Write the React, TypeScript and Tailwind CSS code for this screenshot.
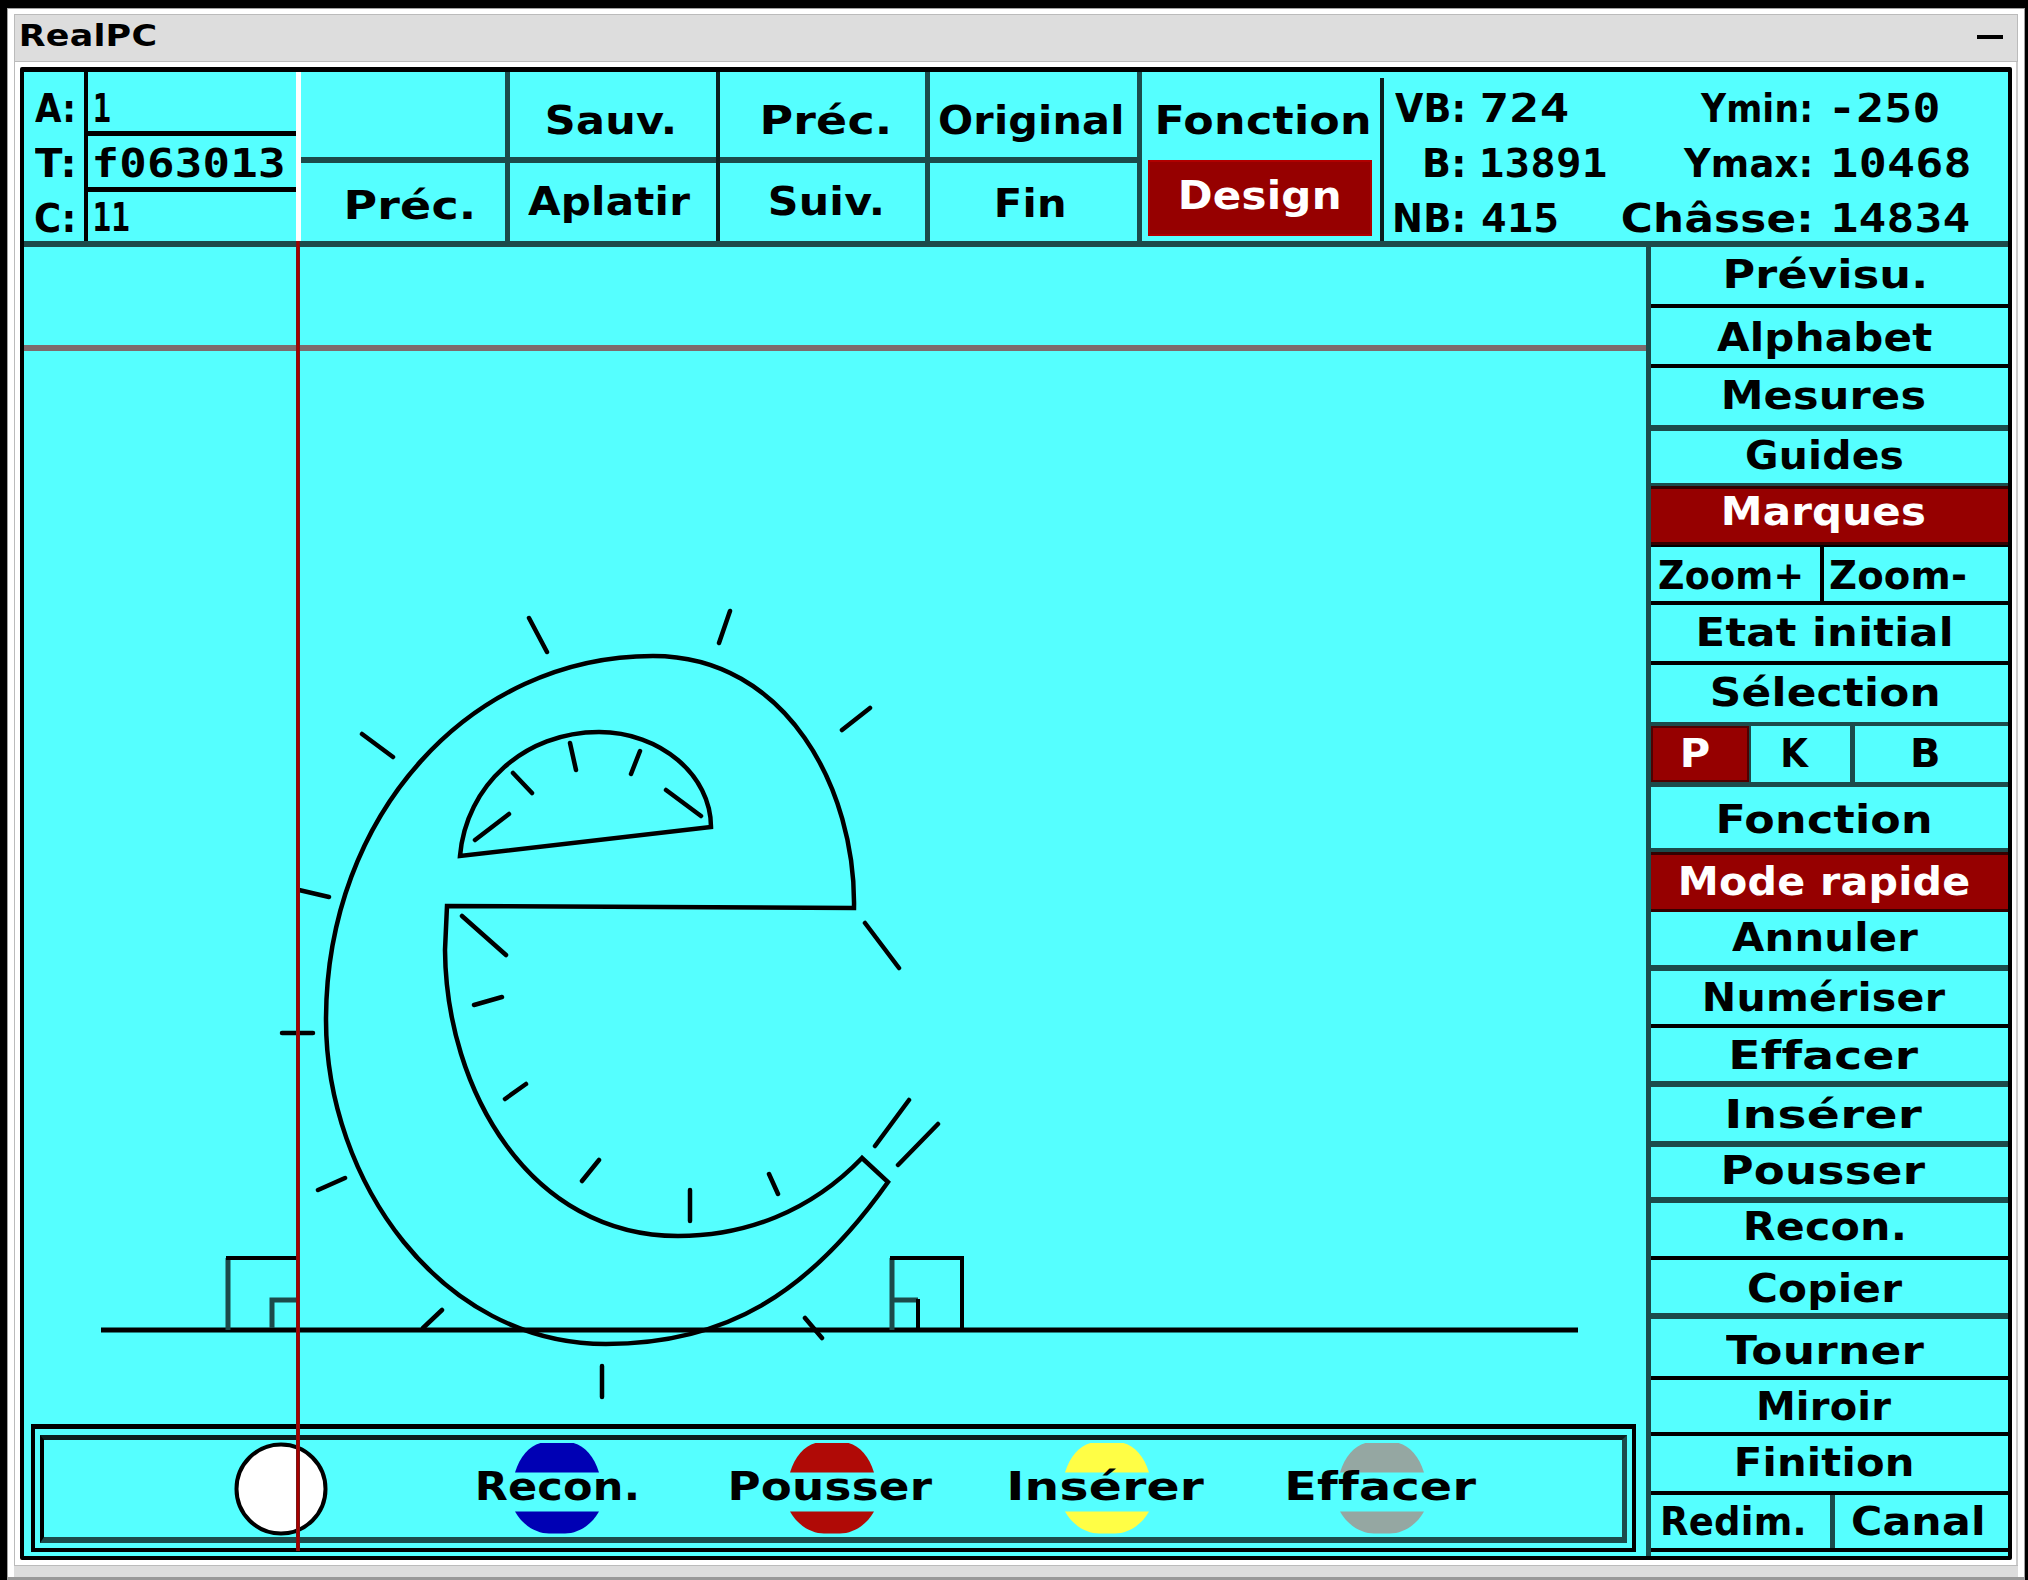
import React from 'react';

const ctx = document.createElement('canvas').getContext('2d')!;

type LabelProps = { w: number; children: string; mono?: boolean; small?: boolean; className?: string };

/* Bold text stretched so that its ink spans exactly `w` pixels. */
function Label({ w, children, mono, small, className = '' }: LabelProps) {
  ctx.font = `bold ${small ? 31 : 38.4}px ${mono ? '"DejaVu Sans Mono"' : '"DejaVu Sans"'}`;
  ctx.letterSpacing = '0.2px';
  const m = ctx.measureText(children);
  const s = w / (m.actualBoundingBoxLeft + m.actualBoundingBoxRight);
  return (
    <span
      className={`block shrink-0 whitespace-pre font-bold tracking-[0.2px] ${small ? 'h-[23px] text-[31px] leading-[23px]' : 'h-[28px] text-[38.4px] leading-[31px]'} ${mono ? "font-['DejaVu_Sans_Mono',monospace]" : "font-['DejaVu_Sans',sans-serif]"} ${className}`}
      style={{ width: w }}
    >
      <span
        className="inline-block origin-left"
        style={{ transform: `translateX(${m.actualBoundingBoxLeft * s}px) scaleX(${s})` }}
      >
        {children}
      </span>
    </span>
  );
}

const T = 'border-[#1c4b4b]';
const B = 'border-black';

type Item = { text: string; w: number; row: string; red?: boolean };

function Row({ text, w, row, red }: Item) {
  return (
    <div className={`flex shrink-0 justify-center pr-[10px] ${row} ${red ? 'bg-[#960000] text-white' : ''}`}>
      <Label w={w}>{text}</Label>
    </div>
  );
}

const upper: Item[] = [
  { text: 'Prévisu.', w: 198, row: `h-[61px] border-b-4 pt-[12px] ${B}` },
  { text: 'Alphabet', w: 215, row: `h-[60px] border-b-4 pt-[14px] ${B}` },
  { text: 'Mesures', w: 201, row: `h-[63px] border-b-6 pt-[12px] ${T}` },
  { text: 'Guides', w: 157, row: `h-[55px] border-b-3 pt-[9px] ${T}` },
  { text: 'Marques', w: 201, row: `h-[59px] border-y-3 border-[#330000] pt-[7px]`, red: true },
];

const middle: Item[] = [
  { text: 'Etat initial', w: 251, row: `h-[60px] border-b-4 pt-[12px] ${B}` },
  { text: 'Sélection', w: 226, row: `h-[61px] border-b-4 pt-[12px] ${T}` },
];

const lower: Item[] = [
  { text: 'Fonction', w: 211, row: `h-[65px] border-b-4 pt-[17px] ${T}` },
  { text: 'Mode rapide', w: 288, row: `h-[60px] border-y-3 border-[#330000] pt-[11px]`, red: true },
  { text: 'Annuler', w: 186, row: `h-[59px] border-b-6 pt-[10px] ${T}` },
  { text: 'Numériser', w: 240, row: `h-[57px] border-b-4 pt-[11px] ${B}` },
  { text: 'Effacer', w: 186, row: `h-[59px] border-b-6 pt-[12px] ${T}` },
  { text: 'Insérer', w: 194, row: `h-[60px] border-b-6 pt-[12px] ${T}` },
  { text: 'Pousser', w: 201, row: `h-[56px] border-b-6 pt-[8px] ${T}` },
  { text: 'Recon.', w: 157, row: `h-[57px] border-b-4 pt-[8px] ${B}` },
  { text: 'Copier', w: 154, row: `h-[59px] border-b-6 pt-[13px] ${T}` },
  { text: 'Tourner', w: 198, row: `h-[61px] border-b-4 pt-[16px] ${B}` },
  { text: 'Miroir', w: 132, row: `h-[56px] border-b-4 pt-[11px] ${B}` },
  { text: 'Finition', w: 175, row: `h-[59px] border-b-4 pt-[11px] ${B}` },
];

const cell = 'flex shrink-0';

function Column({ className, children }: { className: string; children: React.ReactNode }) {
  return <div className={`flex shrink-0 flex-col ${className}`}>{children}</div>;
}

const rule = 'h-[6px] shrink-0 bg-[#1c4b4b]';

function Header() {
  return (
    <div className="flex h-[175px] shrink-0 border-b-6 border-[#1c4b4b]">
      <Column className="w-[60px] gap-[27px] pl-[11px] pt-[21px]">
        <Label w={38}>A:</Label>
        <Label w={38}>T:</Label>
        <Label w={38}>C:</Label>
      </Column>
      <Column className="w-[212px] border-l-4 border-black">
        <div className="h-[64px] border-b-[5px] border-black pl-[7px] pt-[21px]"><Label w={15} mono>1</Label></div>
        <div className="h-[56px] border-b-[5px] border-black pl-[7px] pt-[12px]"><Label w={188} mono>f063013</Label></div>
        <div className="pl-[7px] pt-[10px]"><Label w={34} mono>11</Label></div>
      </Column>
      <div className="w-[5px] shrink-0 bg-white" />
      <Column className="w-[209px] border-r-5 border-[#1c4b4b]">
        <div className={`${cell} h-[85px]`} />
        <div className={rule} />
        <Label w={125} className="ml-[46px] mt-[27px]">Préc.</Label>
      </Column>
      <Column className="w-[210px] border-r-4 border-[#0c2020]">
        <div className={`${cell} h-[85px] pl-[37px] pt-[33px]`}><Label w={126}>Sauv.</Label></div>
        <div className={rule} />
        <Label w={162} className="ml-[18px] mt-[23px]">Aplatir</Label>
      </Column>
      <Column className="w-[210px] border-r-5 border-[#1c4b4b]">
        <div className={`${cell} h-[85px] pl-[43px] pt-[33px]`}><Label w={125}>Préc.</Label></div>
        <div className={rule} />
        <Label w={111} className="ml-[50px] mt-[23px]">Suiv.</Label>
      </Column>
      <Column className="w-[212px] border-r-5 border-[#1c4b4b]">
        <div className={`${cell} h-[85px] pl-[9px] pt-[33px]`}><Label w={182}>Original</Label></div>
        <div className={rule} />
        <Label w={67} className="ml-[67px] mt-[25px]">Fin</Label>
      </Column>
      <Column className="w-[238px]">
        <div className={`${cell} h-[88px] pl-[16px] pt-[33px]`}><Label w={211}>Fonction</Label></div>
        <div className="ml-[6px] h-[76px] w-[224px] border-2 border-[#b00000] bg-[#960000] pl-[31px] pt-[18px] text-white">
          <Label w={158}>Design</Label>
        </div>
      </Column>
      <div className="mt-[6px] w-[4px] shrink-0 bg-[#0c2020]" />
      <Column className="w-[79px] items-end gap-[27px] pt-[21px]">
        <Label w={68}>VB:</Label>
        <Label w={38}>B:</Label>
        <Label w={68}>NB:</Label>
      </Column>
      <Column className="w-[143px] gap-[27px] pl-[19px] pt-[21px]">
        <Label w={86} mono>724</Label>
        <Label w={124} mono>13891</Label>
        <Label w={75} mono>415</Label>
      </Column>
      <Column className="w-[204px] items-end gap-[27px] pt-[21px]">
        <Label w={110}>Ymin:</Label>
        <Label w={127}>Ymax:</Label>
        <Label w={188}>Châsse:</Label>
      </Column>
      <Column className="gap-[27px] pl-[24px] pt-[21px]">
        <Label w={104} mono>-250</Label>
        <Label w={135} mono>10468</Label>
        <Label w={135} mono>14834</Label>
      </Column>
    </div>
  );
}

const ticks = [
  [529, 618, 547, 652], [730, 611, 719, 643], [870, 708, 842, 730], [362, 734, 393, 757],
  [570, 743, 576, 770], [640, 751, 631, 774], [513, 773, 532, 793], [509, 814, 475, 840],
  [666, 790, 701, 816], [299, 890, 329, 897], [462, 916, 506, 955], [865, 923, 899, 968],
  [502, 997, 474, 1005], [526, 1084, 505, 1099], [599, 1160, 582, 1181], [690, 1190, 690, 1221],
  [769, 1174, 778, 1194], [909, 1100, 875, 1146], [938, 1124, 898, 1165], [282, 1033, 313, 1033],
  [345, 1178, 318, 1190], [442, 1310, 423, 1328], [805, 1318, 822, 1338], [602, 1366, 602, 1397],
];

function Drawing() {
  return (
    <svg className="block h-[1177px] w-[1622px] shrink-0" viewBox="24 247 1622 1177" fill="none" stroke="#000" strokeWidth="4">
      <path d="M24 348H1646" stroke="#7d6b6d" strokeWidth="6" />
      <path strokeWidth="4.5" d="M854 908C856 790 787 656 653 656C470 656 326 815 326 1020C326 1180 440 1344 606 1344C725 1344 808 1295 888 1182L862 1158C810 1212 745 1236 678 1236C530 1236 446 1090 445 950L447 906Z" />
      <path strokeWidth="4.5" d="M460 856C466 785 525 732 599 732C660 732 711 775 711 827Z" />
      <path strokeWidth="4.5" d={ticks.map(([a, b, c, d]) => `M${a} ${b}L${c} ${d}`).join('')} strokeLinecap="round" />
      <path d="M101 1330H1578" strokeWidth="5" />
      <path d="M228 1330V1258M892 1330V1258M272 1328V1300H298M892 1300H918" stroke="#1c4b4b" strokeWidth="5" />
      <path d="M226 1258H298M890 1258H964M962 1258V1330M918 1299V1330" />
    </svg>
  );
}

function Disc({ fill, w, children }: { fill: string; w: number; children: string }) {
  return (
    <div className="flex w-[275px] shrink-0 flex-col items-center">
      <svg className="block h-[92px] w-[92px]" viewBox="0 0 92 92">
        <path d="M4 29.500C10 10 22 -1 37 -1H55C70 -1 82 10 88 29.500Z" fill={fill} />
        <path d="M4 68.500C12 83 26 90.500 38 90.500H54C66 90.500 80 83 88 68.500Z" fill={fill} />
      </svg>
      <Label w={w} className="relative -mt-[64px]">{children}</Label>
    </div>
  );
}

function Palette() {
  return (
    <div className="ml-[7px] h-[128px] w-[1605px] shrink-0 border-x-4 border-b-4 border-t-[5px] border-black pl-[5px] pt-[6px]">
      <div className="flex h-[108px] w-[1587px] border-b-[6px] border-l-4 border-r-[5px] border-t-[5px] border-b-[#1c4b4b] border-l-black border-r-[#1c4b4b] border-t-[#0c2020] pt-[2px]">
        <svg className="ml-[190px] block h-[94px] w-[94px] shrink-0" viewBox="0 0 94 94">
          <circle cx="47" cy="47" r="44.500" fill="#fff" stroke="#000" strokeWidth="4" />
        </svg>
        <div className="flex pl-[91px] pt-[1px]">
          <Disc fill="#0000b4" w={158}>Recon.</Disc>
          <Disc fill="#b00a06" w={201}>Pousser</Disc>
          <Disc fill="#fffe45" w={194}>Insérer</Disc>
          <Disc fill="#95a7a2" w={188}>Effacer</Disc>
        </div>
      </div>
    </div>
  );
}

function Sidebar() {
  return (
    <div className="flex w-[362px] shrink-0 flex-col border-l-[5px] border-[#1c4b4b]">
      {upper.map((i) => <Row key={i.text} {...i} />)}
      <div className="flex h-[60px] shrink-0 border-b-4 border-t-2 border-black">
        <div className="w-[173px] border-r-4 border-black pl-[8px] pt-[13px]"><Label w={142}>Zoom+</Label></div>
        <div className="pl-[6px] pt-[13px]"><Label w={135}>Zoom-</Label></div>
      </div>
      {middle.map((i) => <Row key={i.text} {...i} />)}
      <div className="flex h-[61px] shrink-0 border-b-[5px] border-[#1c4b4b]">
        <div className="w-[98px] border-2 border-[#500000] bg-[#960000] pl-[30px] pt-[10px] text-white"><Label w={26}>P</Label></div>
        <div className="w-[106px] border-l-2 border-r-[5px] border-[#1c4b4b] pl-[32px] pt-[12px]"><Label w={26}>K</Label></div>
        <div className="pl-[58px] pt-[12px]"><Label w={25}>B</Label></div>
      </div>
      {lower.map((i) => <Row key={i.text} {...i} />)}
      <div className="flex h-[57px] shrink-0 border-b-4 border-black">
        <div className="w-[184px] border-r-5 border-[#1c4b4b] pl-[12px] pt-[11px]"><Label w={140}>Redim.</Label></div>
        <div className="pl-[17px] pt-[11px]"><Label w={130}>Canal</Label></div>
      </div>
    </div>
  );
}

export default function App() {
  return (
    <div className="h-[1580px] w-[2028px] overflow-hidden bg-black pl-[7px] pt-[8px] text-black">
      <div className="flex h-[1572px] w-[2018px] flex-col border-x border-t border-[#a0a0a0] bg-white">
        <div className="mx-[6px] mt-[5px] flex h-[48px] shrink-0 items-start justify-between border border-[#bbbbbb] bg-[#dddddd] pl-[6px] pr-[14px] pt-[9px]">
          <Label w={134} small>RealPC</Label>
          <div className="mt-[11px] h-[4px] w-[26px] bg-black" />
        </div>
        <div className="mx-[6px] flex shrink-0 border-l border-r-2 border-l-[#bbbbbb] border-r-[#cccccc] pb-[5px] pl-[5px] pt-[5px]">
          <div className="relative flex h-[1493px] w-[1992px] shrink-0 flex-col overflow-hidden rounded-[2px] border-x-4 border-b-4 border-t-5 border-black bg-[#55ffff]">
            <Header />
            <div className="flex h-[1309px] shrink-0">
              <div className="flex w-[1622px] shrink-0 flex-col">
                <Drawing />
                <Palette />
              </div>
              <Sidebar />
            </div>
            <div className="absolute left-[272px] top-[169px] h-[1310px] w-[4px] border-x border-[#7a1515] bg-[#a80000]" />
          </div>
        </div>
        <div className="mx-[6px] h-[12px] shrink-0 border-t border-[#bbbbbb] bg-[#dddddd]" />
        <div className="h-[4px] shrink-0 bg-[#999999]" />
      </div>
    </div>
  );
}
